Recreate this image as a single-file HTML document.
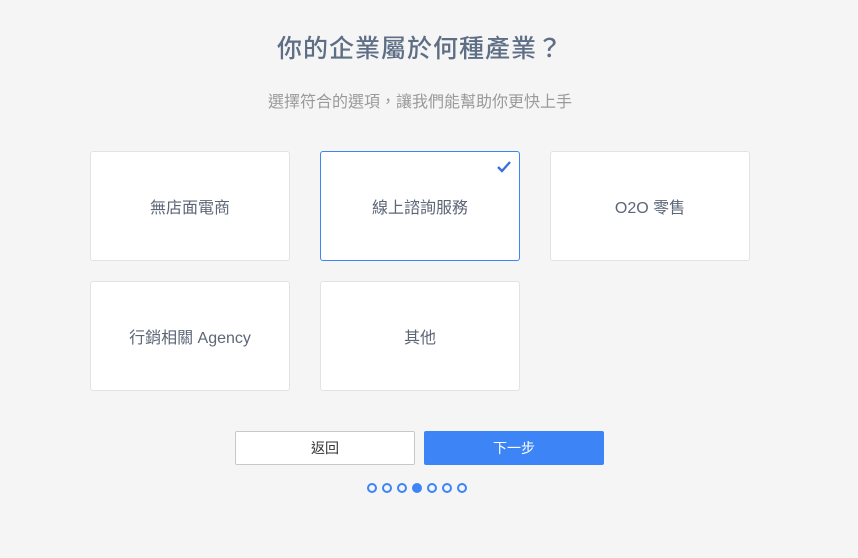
<!DOCTYPE html>
<html><head><meta charset="utf-8"><style>
body{margin:0;width:858px;height:558px;background:#f5f5f5;font-family:"Liberation Sans","Noto Sans CJK TC",sans-serif;position:relative;overflow:hidden}
.t{position:absolute;left:0;width:840px;text-align:center}
.card{position:absolute;width:198px;height:108px;background:#fff;border:1px solid #e3e3e3;border-radius:3px;display:flex;align-items:center;justify-content:center;font-size:16px;color:#5c6677}
.sel{border-color:#3d85f7}
.btn{position:absolute;top:431px;height:34px;width:180px;box-sizing:border-box;border-radius:2px;display:flex;align-items:center;justify-content:center;font-size:14px}
.dot{position:absolute;top:483px;width:10px;height:10px;box-sizing:border-box;border:2px solid #3d85f7;border-radius:50%}
</style></head><body>
<div class="t" style="top:29px;font-size:25px;color:#5e6e85;letter-spacing:1px;font-weight:500">你的企業屬於何種產業？</div>
<div class="t" style="top:88px;font-size:16px;color:#9a9a9a">選擇符合的選項，讓我們能幫助你更快上手</div>
<div class="card" style="left:90px;top:151px">無店面電商</div>
<div class="card sel" style="left:320px;top:151px">線上諮詢服務
<svg style="position:absolute;right:7px;top:8px" width="16" height="13" viewBox="0 0 16 13"><path d="M2 7l4 4 8-9" stroke="#3d6fd9" stroke-width="2.4" fill="none"/></svg></div>
<div class="card" style="left:550px;top:151px">O2O 零售</div>
<div class="card" style="left:90px;top:281px">行銷相關 Agency</div>
<div class="card" style="left:320px;top:281px">其他</div>
<div class="btn" style="left:235px;background:#fff;border:1px solid #c8c8c8;color:#333">返回</div>
<div class="btn" style="left:424px;background:#3d85f7;color:#fff">下一步</div>
<div class="dot" style="left:367px"></div>
<div class="dot" style="left:382px"></div>
<div class="dot" style="left:397px"></div>
<div class="dot" style="left:412px;background:#3d85f7"></div>
<div class="dot" style="left:427px"></div>
<div class="dot" style="left:442px"></div>
<div class="dot" style="left:457px"></div>
</body></html>
